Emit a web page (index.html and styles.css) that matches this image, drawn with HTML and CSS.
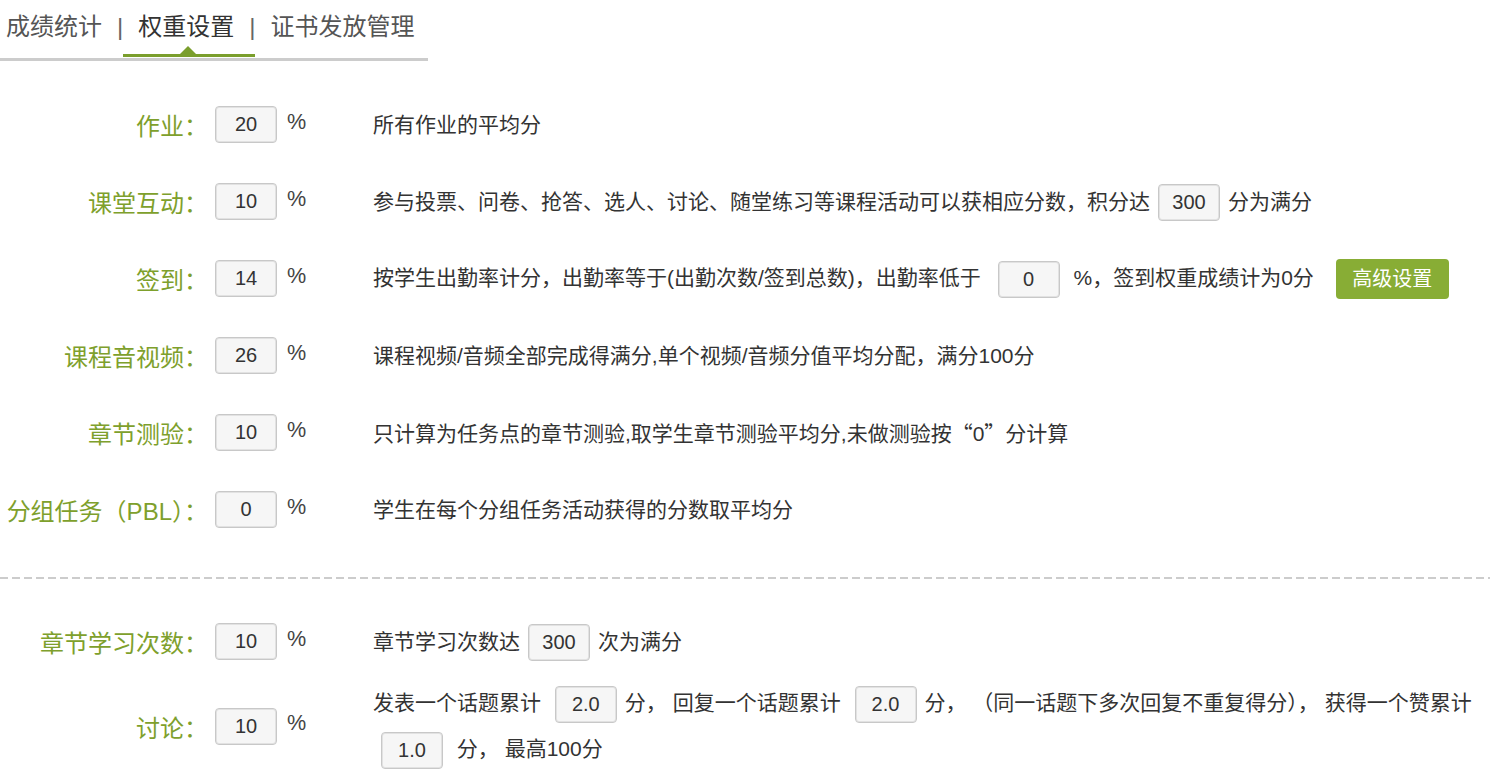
FILE: index.html
```html
<!DOCTYPE html>
<html lang="zh-CN">
<head>
<meta charset="utf-8">
<title>权重设置</title>
<link rel="stylesheet" href="styles.css">
</head>
<body>
<div class="page">
  <div class="tabs">
    <span class="tab">成绩统计</span>
    <span class="sep">|</span>
    <span class="tab active">权重设置</span>
    <span class="sep">|</span>
    <span class="tab">证书发放管理</span>
  </div>

  <div class="section first">
    <div class="row">
      <div class="label"><span>作业：</span></div>
      <input class="num" type="text" value="20">
      <span class="pct">%</span>
      <div class="desc">所有作业的平均分</div>
    </div>
    <div class="row">
      <div class="label"><span>课堂互动：</span></div>
      <input class="num" type="text" value="10">
      <span class="pct">%</span>
      <div class="desc">参与投票、问卷、抢答、选人、讨论、随堂练习等课程活动可以获相应分数，积分达<input class="num inl" type="text" value="300">分为满分</div>
    </div>
    <div class="row">
      <div class="label"><span>签到：</span></div>
      <input class="num" type="text" value="14">
      <span class="pct">%</span>
      <div class="desc">按学生出勤率计分，出勤率等于(出勤次数/签到总数)，出勤率低于 <input class="num inl wide" type="text" value="0"> %，签到权重成绩计为0分<span class="btn">高级设置</span></div>
    </div>
    <div class="row">
      <div class="label"><span>课程音视频：</span></div>
      <input class="num" type="text" value="26">
      <span class="pct">%</span>
      <div class="desc">课程视频/音频全部完成得满分,单个视频/音频分值平均分配，满分100分</div>
    </div>
    <div class="row">
      <div class="label"><span>章节测验：</span></div>
      <input class="num" type="text" value="10">
      <span class="pct">%</span>
      <div class="desc">只计算为任务点的章节测验,取学生章节测验平均分,未做测验按<span class="cjk">“</span>0<span class="cjk">”</span>分计算</div>
    </div>
    <div class="row">
      <div class="label"><span>分组任务（PBL）：</span></div>
      <input class="num" type="text" value="0">
      <span class="pct">%</span>
      <div class="desc">学生在每个分组任务活动获得的分数取平均分</div>
    </div>
  </div>

  <div class="dash"></div>

  <div class="section second">
    <div class="row">
      <div class="label"><span>章节学习次数：</span></div>
      <input class="num" type="text" value="10">
      <span class="pct">%</span>
      <div class="desc">章节学习次数达<input class="num inl" type="text" value="300">次为满分</div>
    </div>
    <div class="row">
      <div class="label"><span>讨论：</span></div>
      <input class="num" type="text" value="10">
      <span class="pct">%</span>
      <div class="desc multi">发表一个话题累计 <input class="num inl" type="text" value="2.0">分， 回复一个话题累计 <input class="num inl" type="text" value="2.0">分， （同一话题下多次回复不重复得分）， 获得一个赞累计<br><input class="num inl" type="text" value="1.0"> 分， 最高100分</div>
    </div>
  </div>
</div>
</body>
</html>
```

FILE: styles.css
```css
html, body {
  margin: 0;
  padding: 0;
  background: #ffffff;
}

body {
  font-family: "Liberation Sans", "Noto Sans CJK SC", sans-serif;
  color: #333333;
  overflow: hidden;
}

.page {
  width: 1490px;
}

.tabs {
  display: flex;
  align-items: flex-start;
  width: 422px;
  height: 58px;
  border-bottom: 3px solid #cccccc;
  padding-left: 6px;
  box-sizing: content-box;
  font-size: 24px;
  line-height: 54px;
  color: #555555;
}

.tab {
  position: relative;
  white-space: nowrap;
}

.tab.active {
  color: #333333;
}

.tab.active::after {
  content: "";
  position: absolute;
  left: -15px;
  right: -21px;
  bottom: -3px;
  height: 3px;
  background: #7a9e2c;
}

.tab.active::before {
  content: "";
  position: absolute;
  left: 42px;
  bottom: 0;
  width: 0;
  height: 0;
  border-left: 8px solid transparent;
  border-right: 8px solid transparent;
  border-bottom: 8px solid #7a9e2c;
}

.sep {
  margin: 0 15px;
  color: #666666;
}

.section.first {
  margin-top: 25px;
}

.section.second {
  margin-top: 24px;
}

.row {
  display: flex;
  align-items: center;
  min-height: 77px;
}

.label {
  width: 208px;
  flex: none;
  display: flex;
  justify-content: flex-end;
  white-space: nowrap;
  font-size: 24px;
  color: #7ea02c;
}

.num {
  box-sizing: border-box;
  width: 62px;
  height: 37px;
  margin: 0 0 0 7px;
  padding: 0;
  border: 1px solid #c8c8c8;
  border-radius: 4px;
  background: #f6f6f6;
  font-family: "Liberation Sans", "Noto Sans CJK SC", sans-serif;
  font-size: 20px;
  color: #333333;
  text-align: center;
  flex: none;
  outline: none;
  box-shadow: inset 0 0 0 1px #e2e2e2;
}

.num.inl {
  margin: 0 8px;
  vertical-align: middle;
}

.num.inl.wide {
  margin-left: 11px;
}

.pct {
  box-sizing: border-box;
  width: 96px;
  flex: none;
  padding-left: 10px;
  font-size: 21.6px;
  color: #444444;
  position: relative;
  top: -3px;
}

.desc {
  flex: 1;
  font-size: 21px;
  color: #333333;
  line-height: 40px;
}

.desc.multi {
  line-height: 46px;
}

.cjk {
  font-family: "Noto Sans CJK SC", sans-serif;
}

.btn {
  display: inline-block;
  vertical-align: middle;
  width: 113px;
  height: 40px;
  line-height: 40px;
  margin-left: 22px;
  border-radius: 4px;
  background: #88ad35;
  color: #ffffff;
  font-size: 20px;
  text-align: center;
}

.dash {
  height: 2px;
  margin-top: 29px;
  background: repeating-linear-gradient(to right, #cccccc 0, #cccccc 8px, transparent 8px, transparent 12px);
}
```
